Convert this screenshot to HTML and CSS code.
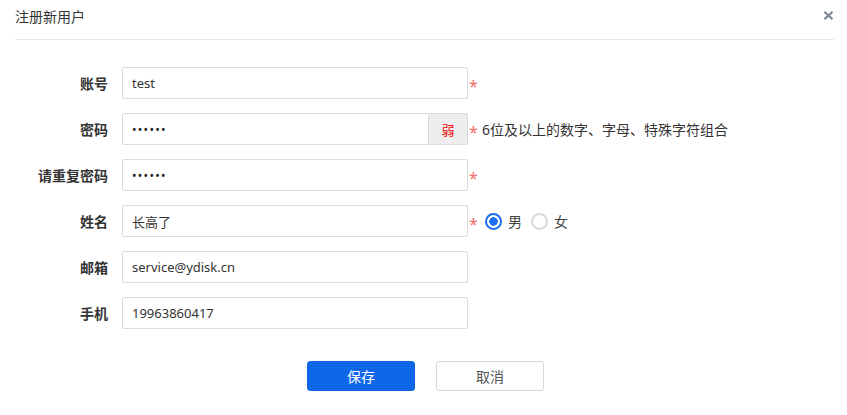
FILE: index.html
```html
<!DOCTYPE html>
<html lang="zh">
<head>
<meta charset="utf-8">
<title>注册新用户</title>
<link rel="stylesheet" href="styles.css">
</head>
<body>
<div class="dialog">
  <div class="header">
    <span class="title">注册新用户</span>
    <span class="close" aria-label="关闭">
      <svg width="11" height="9" viewBox="0 0 11 9"><path d="M1.5 0.8L9.5 8.2M9.5 0.8L1.5 8.2" stroke="#80869a" stroke-width="2.2" stroke-linecap="butt"/></svg>
    </span>
  </div>
  <form class="form">
    <div class="row">
      <label class="label">账号</label>
      <div class="field"><input class="input" type="text" value="test"></div>
      <span class="req">*</span>
    </div>
    <div class="row">
      <label class="label">密码</label>
      <div class="field with-addon">
        <input class="input pwd" type="password" value="123456">
        <span class="addon">弱</span>
      </div>
      <span class="req">*</span>
      <span class="hint">6位及以上的数字、字母、特殊字符组合</span>
    </div>
    <div class="row">
      <label class="label">请重复密码</label>
      <div class="field"><input class="input pwd" type="password" value="123456"></div>
      <span class="req">*</span>
    </div>
    <div class="row">
      <label class="label">姓名</label>
      <div class="field"><input class="input" type="text" value="长高了"></div>
      <span class="req">*</span>
      <div class="radios">
        <span class="radio checked"><span class="dot"></span>男</span>
        <span class="radio"><span class="dot"></span>女</span>
      </div>
    </div>
    <div class="row">
      <label class="label">邮箱</label>
      <div class="field"><input class="input" type="text" value="service@ydisk.cn"></div>
    </div>
    <div class="row">
      <label class="label">手机</label>
      <div class="field"><input class="input" type="text" value="19963860417"></div>
    </div>
  </form>
  <div class="footer">
    <button class="btn primary" type="button">保存</button>
    <button class="btn" type="button">取消</button>
  </div>
</div>
</body>
</html>
```
FILE: styles.css
```css
html, body {
  margin: 0;
  padding: 0;
  background: #fff;
}
body {
  font-family: "Noto Sans", "Noto Sans CJK SC", sans-serif;
  color: #333;
  font-size: 13px;
}
.dialog {
  width: 847px;
  height: 415px;
  box-sizing: border-box;
  padding: 0 13px 0 15px;
}
.header {
  height: 39px;
  border-bottom: 1px solid #e6e6e6;
  display: flex;
  align-items: center;
  justify-content: space-between;
}
.title {
  font-size: 14px;
  color: #333;
  margin-top: -8px;
}
.close {
  display: flex;
  margin-top: -9px;
  margin-right: 0;
}
.form {
  padding-top: 27px;
  display: flex;
  flex-direction: column;
  gap: 14px;
}
.row {
  display: flex;
  align-items: center;
  height: 32px;
}
.label {
  width: 93px;
  text-align: right;
  font-size: 14px;
  font-weight: bold;
  color: #333;
  margin-right: 14px;
}
.field {
  width: 346px;
  height: 32px;
  display: flex;
}
.input {
  box-sizing: border-box;
  width: 100%;
  height: 32px;
  border: 1px solid #dcdcdc;
  border-radius: 2px;
  padding: 0 9px;
  font-family: "Noto Sans", "Noto Sans CJK SC", sans-serif;
  font-size: 13px;
  color: #333;
  outline: none;
}
.pwd {
  font-size: 12px;
  letter-spacing: 1.3px;
  color: #222;
}
.with-addon .input {
  border-radius: 2px 0 0 2px;
  flex: 1;
}
.addon {
  box-sizing: border-box;
  width: 39px;
  height: 32px;
  border: 1px solid #dcdcdc;
  border-left: none;
  background: #eeeeee;
  color: #e00;
  display: flex;
  align-items: center;
  justify-content: center;
  font-size: 13px;
  border-radius: 0 2px 2px 0;
}
.req {
  color: #f56c6c;
  font-size: 16px;
  margin-left: 1px;
  padding-top: 5px;
  width: 10px;
}
.hint {
  font-size: 14px;
  color: #333;
  margin-left: 3px;
}
.radios {
  display: flex;
  align-items: center;
  margin-left: 6px;
  gap: 9px;
}
.radio {
  display: flex;
  align-items: center;
  gap: 6px;
  font-size: 14px;
  color: #444;
}
.dot {
  box-sizing: border-box;
  width: 17px;
  height: 17px;
  border-radius: 50%;
  border: 2px solid #d9d9d9;
  background: #fff;
}
.radio.checked .dot {
  border-color: #1a6ef0;
  background: radial-gradient(circle, #1a6ef0 0 4px, #fff 4.5px);
}
.footer {
  display: flex;
  justify-content: center;
  gap: 21px;
  padding-top: 32px;
  padding-left: 2px;
}
.btn {
  width: 108px;
  height: 30px;
  border: 1px solid #d3d7df;
  border-radius: 3px;
  background: #fff;
  color: #555;
  font-family: "Noto Sans", "Noto Sans CJK SC", sans-serif;
  font-size: 14px;
  cursor: pointer;
}
.btn.primary {
  background: #0f67e8;
  border-color: #0f67e8;
  color: #fff;
}
```
